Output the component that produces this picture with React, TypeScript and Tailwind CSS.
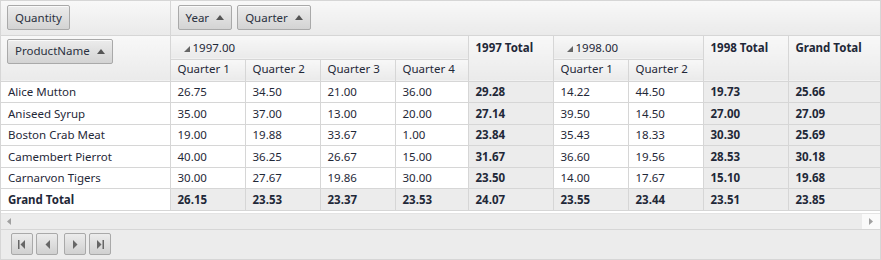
import React from 'react'

const rows = [
  { name: 'Alice Mutton', q97: ['26.75', '34.50', '21.00', '36.00'], t97: '29.28', q98: ['14.22', '44.50'], t98: '19.73', gt: '25.66' },
  { name: 'Aniseed Syrup', q97: ['35.00', '37.00', '13.00', '20.00'], t97: '27.14', q98: ['39.50', '14.50'], t98: '27.00', gt: '27.09' },
  { name: 'Boston Crab Meat', q97: ['19.00', '19.88', '33.67', '1.00'], t97: '23.84', q98: ['35.43', '18.33'], t98: '30.30', gt: '25.69' },
  { name: 'Camembert Pierrot', q97: ['40.00', '36.25', '26.67', '15.00'], t97: '31.67', q98: ['36.60', '19.56'], t98: '28.53', gt: '30.18' },
  { name: 'Carnarvon Tigers', q97: ['30.00', '27.67', '19.86', '30.00'], t97: '23.50', q98: ['14.00', '17.67'], t98: '15.10', gt: '19.68' },
]

const grand = { q97: ['26.15', '23.53', '23.37', '23.53'], t97: '24.07', q98: ['23.55', '23.44'], t98: '23.51', gt: '23.85' }

const SortUp = () => (
  <svg width="8" height="5" viewBox="0 0 8 5" className="ml-[7px] inline-block">
    <path d="M0 5 L4 0 L8 5 Z" fill="#555" />
  </svg>
)

const Expander = () => (
  <svg width="6" height="6" viewBox="0 0 6 6" className="mr-[3px] inline-block align-[0px]">
    <path d="M6 0 L6 6 L0 6 Z" fill="#666" />
  </svg>
)

function FieldButton({ label, sort = false }: { label: string; sort?: boolean }) {
  return (
    <div className="inline-flex h-[25px] items-center rounded-[2px] border border-[#a9a9a9] bg-gradient-to-b from-[#ececec] to-[#d3d3d3] px-[7px] text-[#2a3140] shadow-[inset_0_1px_0_#fafafa]">
      {label}
      {sort && <SortUp />}
    </div>
  )
}

function PagerButton({ children, className = '' }: { children: React.ReactNode; className?: string }) {
  return (
    <div
      className={`flex h-[22px] w-[22px] items-center justify-center rounded-[2px] border border-[#a9a9a9] bg-gradient-to-b from-[#ececec] to-[#d0d0d0] ${className}`}
    >
      {children}
    </div>
  )
}

const hdr = 'border border-[#d6d6d6] bg-gradient-to-b from-[#f8f8f8] to-[#eaeaea] px-[7px] text-left align-top'
const cell = 'border border-[#d6d6d6] bg-white px-[7px] text-left'
const tot = 'border border-[#d6d6d6] bg-[#ececec] px-[7px] text-left font-bold'

export default function App() {
  return (
    <div
      className="h-[260px] w-[881px] overflow-hidden bg-white text-[11.5px] text-[#1f2838]"
      style={{ fontFamily: '"Noto Sans", "Open Sans", sans-serif' }}
    >
      <div className="flex h-[260px] w-[881px] flex-col border border-[#d6d6d6]">
        <table className="w-[879px] table-fixed border-collapse">
          <colgroup>
            <col className="w-[169px]" />
            <col className="w-[75px]" />
            <col className="w-[75px]" />
            <col className="w-[75px]" />
            <col className="w-[73px]" />
            <col className="w-[85px]" />
            <col className="w-[75px]" />
            <col className="w-[75px]" />
            <col className="w-[85px]" />
            <col />
          </colgroup>
          <thead>
            <tr className="h-[34px]">
              <th className={`${hdr} border-t-0 border-l-0 pt-[4px] pl-[6px] font-normal`}>
                <FieldButton label="Quantity" />
              </th>
              <th colSpan={9} className={`${hdr} border-t-0 border-r-0 pt-[4px] font-normal`}>
                <div className="flex gap-[5px]">
                  <FieldButton label="Year" sort />
                  <FieldButton label="Quarter" sort />
                </div>
              </th>
            </tr>
            <tr className="h-[24px]">
              <th rowSpan={2} className={`${hdr} border-l-0 pt-[3px] pl-[6px] font-normal`}>
                <FieldButton label="ProductName" sort />
              </th>
              <th colSpan={4} className={`${hdr} pt-[3px] pl-[13px] font-normal`}>
                <Expander />
                1997.00
              </th>
              <th rowSpan={2} className={`${hdr} to-[#e4e4e4] pt-[3px] font-bold`}>
                1997 Total
              </th>
              <th colSpan={2} className={`${hdr} pt-[3px] pl-[13px] font-normal`}>
                <Expander />
                1998.00
              </th>
              <th rowSpan={2} className={`${hdr} to-[#e4e4e4] pt-[3px] font-bold`}>
                1998 Total
              </th>
              <th rowSpan={2} className={`${hdr} to-[#e4e4e4] border-r-0 pt-[3px] font-bold`}>
                Grand Total
              </th>
            </tr>
            <tr className="h-[22px]">
              {['Quarter 1', 'Quarter 2', 'Quarter 3', 'Quarter 4', 'Quarter 1', 'Quarter 2'].map((q, i) => (
                <th key={i} className={`${hdr} align-middle font-normal`}>
                  {q}
                </th>
              ))}
            </tr>
          </thead>
          <tbody>
            {rows.map((r) => (
              <tr key={r.name} className="h-[21.5px]">
                <td className={`${cell} border-l-0`}>{r.name}</td>
                {r.q97.map((v, i) => (
                  <td key={i} className={cell}>
                    {v}
                  </td>
                ))}
                <td className={tot}>{r.t97}</td>
                {r.q98.map((v, i) => (
                  <td key={'b' + i} className={cell}>
                    {v}
                  </td>
                ))}
                <td className={tot}>{r.t98}</td>
                <td className={`${tot} border-r-0`}>{r.gt}</td>
              </tr>
            ))}
            <tr className="h-[21.5px]">
              <td className={`${cell} border-l-0 font-bold`}>Grand Total</td>
              {grand.q97.map((v, i) => (
                <td key={i} className={tot}>
                  {v}
                </td>
              ))}
              <td className={tot}>{grand.t97}</td>
              {grand.q98.map((v, i) => (
                <td key={'b' + i} className={tot}>
                  {v}
                </td>
              ))}
              <td className={tot}>{grand.t98}</td>
              <td className={`${tot} border-r-0`}>{grand.gt}</td>
            </tr>
          </tbody>
        </table>

        {/* horizontal scrollbar */}
        <div className="mt-[2px] flex h-[16px] items-center border-t border-[#e4e4e4] bg-[#ececec]">
          <div className="flex w-[16px] justify-center">
            <svg width="4" height="7" viewBox="0 0 4 7">
              <path d="M4 0 L0 3.5 L4 7 Z" fill="#a0a0a0" />
            </svg>
          </div>
          <div className="flex-1" />
          <div className="flex h-full w-[18px] items-center justify-center bg-[#fafafa]">
            <svg width="4" height="7" viewBox="0 0 4 7">
              <path d="M0 0 L4 3.5 L0 7 Z" fill="#a0a0a0" />
            </svg>
          </div>
        </div>

        {/* pager */}
        <div className="flex flex-1 items-center gap-[3px] border-t border-[#d6d6d6] bg-[#ececec] pl-[10px]">
          <PagerButton>
            <svg width="8" height="9" viewBox="0 0 8 9">
              <rect x="0" y="0" width="1.5" height="9" fill="#666" />
              <path d="M7 0 L2.5 4.5 L7 9 Z" fill="#666" />
            </svg>
          </PagerButton>
          <PagerButton>
            <svg width="5" height="9" viewBox="0 0 5 9">
              <path d="M5 0 L0.5 4.5 L5 9 Z" fill="#666" />
            </svg>
          </PagerButton>
          <PagerButton className="ml-[3px]">
            <svg width="5" height="9" viewBox="0 0 5 9">
              <path d="M0 0 L4.5 4.5 L0 9 Z" fill="#666" />
            </svg>
          </PagerButton>
          <PagerButton>
            <svg width="8" height="9" viewBox="0 0 8 9">
              <path d="M1 0 L5.5 4.5 L1 9 Z" fill="#666" />
              <rect x="6.5" y="0" width="1.5" height="9" fill="#666" />
            </svg>
          </PagerButton>
        </div>
      </div>
    </div>
  )
}
